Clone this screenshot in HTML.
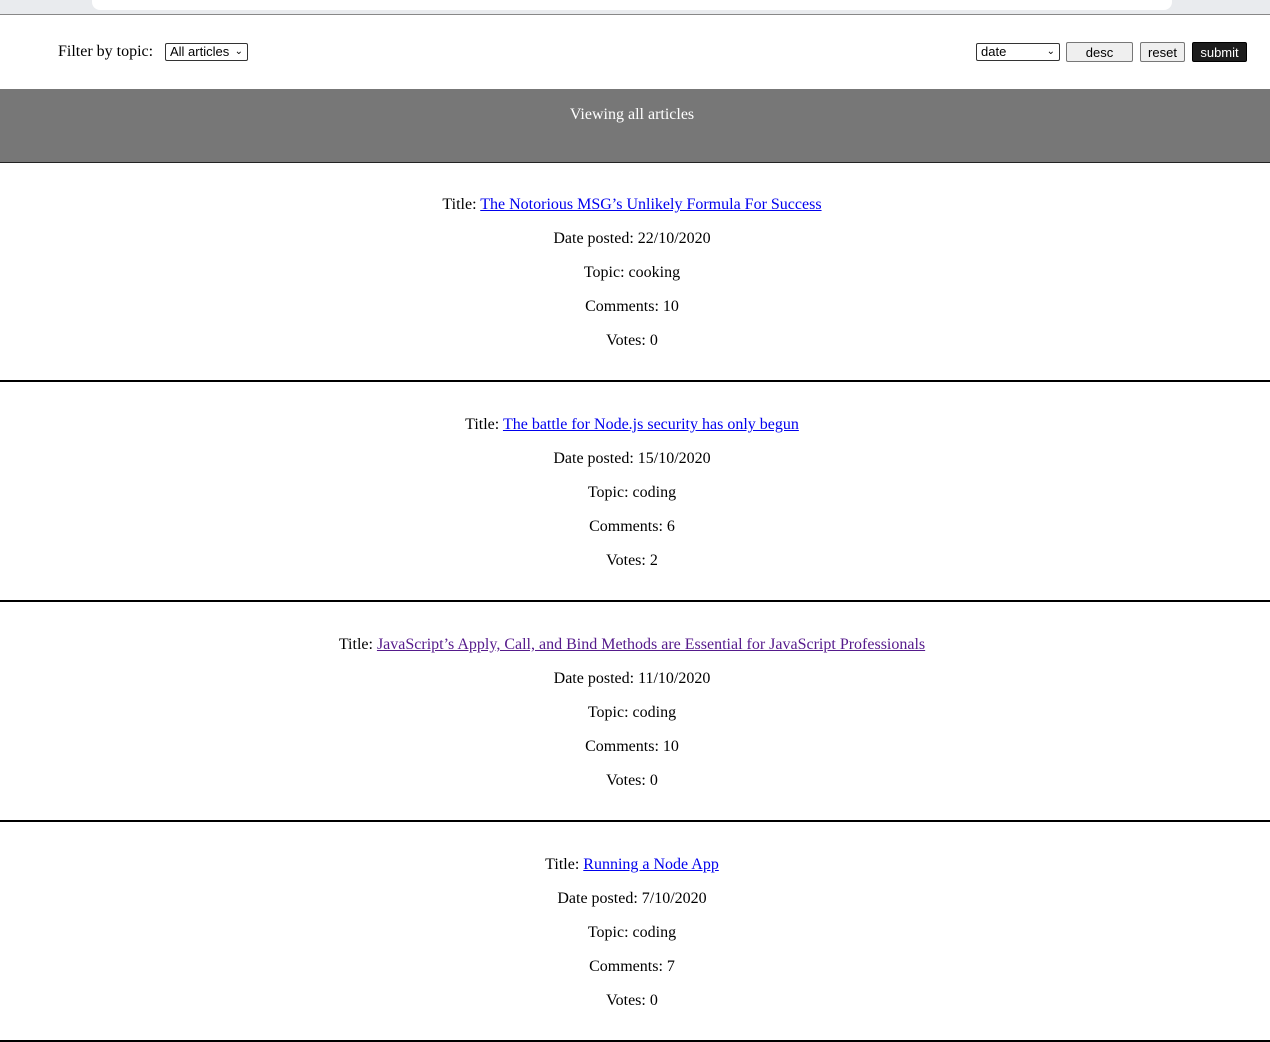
<!DOCTYPE html>
<html><head><style>
body{margin:0;width:1270px;height:970px;overflow:hidden;font-family:"Liberation Serif",serif;font-size:16px;background:#fff;position:relative}
.top{position:absolute;left:0;top:0;width:1270px;height:14px;background:#e9ebee;border-bottom:1px solid #888}
.url{position:absolute;left:92px;top:-10px;width:1080px;height:20px;background:#fff;border-radius:8px}
.ab{position:absolute}
.sel{border:1px solid #333;border-radius:2px;font-family:"Liberation Sans",sans-serif;font-size:13px;height:18px;line-height:16px;box-sizing:border-box;padding-left:4px;background:#fff}
.btn{border:1px solid #777;border-radius:2px;background:#efefef;font-family:"Liberation Sans",sans-serif;font-size:13px;height:20px;line-height:19px;text-align:center;box-sizing:border-box}
.hdr{position:absolute;left:0;top:89px;width:1270px;height:73px;background:#777;border-bottom:1px solid #222;color:#fff;line-height:50px}
.hdr div{width:1264px;text-align:center;padding-top:1px}
.art{position:absolute;left:0;width:1270px;border-bottom:2px solid #000}
.art div{width:1264px;text-align:center;padding-top:2px}
.art p{margin:0;height:34px;line-height:34px}
a{color:#0000ee}
a.v{color:#551a8b}
</style></head><body>
<div class="top"><div class="url"></div></div>
<div class="ab" style="left:58px;top:43px">Filter by topic:</div>
<div class="ab sel" style="left:165px;top:43px;width:83px">All articles<span style="position:absolute;right:4px;font-size:10px">⌄</span></div>
<div class="ab sel" style="left:976px;top:43px;width:84px">date<span style="position:absolute;right:4px;font-size:10px">⌄</span></div>
<div class="ab btn" style="left:1066px;top:42px;width:67px">desc</div>
<div class="ab btn" style="left:1140px;top:42px;width:45px">reset</div>
<div class="ab btn" style="left:1192px;top:42px;width:55px;background:#1d1d1d;color:#fff;border-color:#000">submit</div>
<div class="hdr"><div>Viewing all articles</div></div>
<div class="art" style="top:186px;height:194px"><div>
<p>Title: <a href="#">The Notorious MSG’s Unlikely Formula For Success</a></p><p>Date posted: 22/10/2020</p><p>Topic: cooking</p><p>Comments: 10</p><p>Votes: 0</p></div></div>
<div class="art" style="top:406px;height:194px"><div>
<p>Title: <a href="#">The battle for Node.js security has only begun</a></p><p>Date posted: 15/10/2020</p><p>Topic: coding</p><p>Comments: 6</p><p>Votes: 2</p></div></div>
<div class="art" style="top:626px;height:194px"><div>
<p>Title: <a class="v" href="#">JavaScript’s Apply, Call, and Bind Methods are Essential for JavaScript Professionals</a></p><p>Date posted: 11/10/2020</p><p>Topic: coding</p><p>Comments: 10</p><p>Votes: 0</p></div></div>
<div class="art" style="top:846px;height:194px"><div>
<p>Title: <a href="#">Running a Node App</a></p><p>Date posted: 7/10/2020</p><p>Topic: coding</p><p>Comments: 7</p><p>Votes: 0</p></div></div>
</body></html>
